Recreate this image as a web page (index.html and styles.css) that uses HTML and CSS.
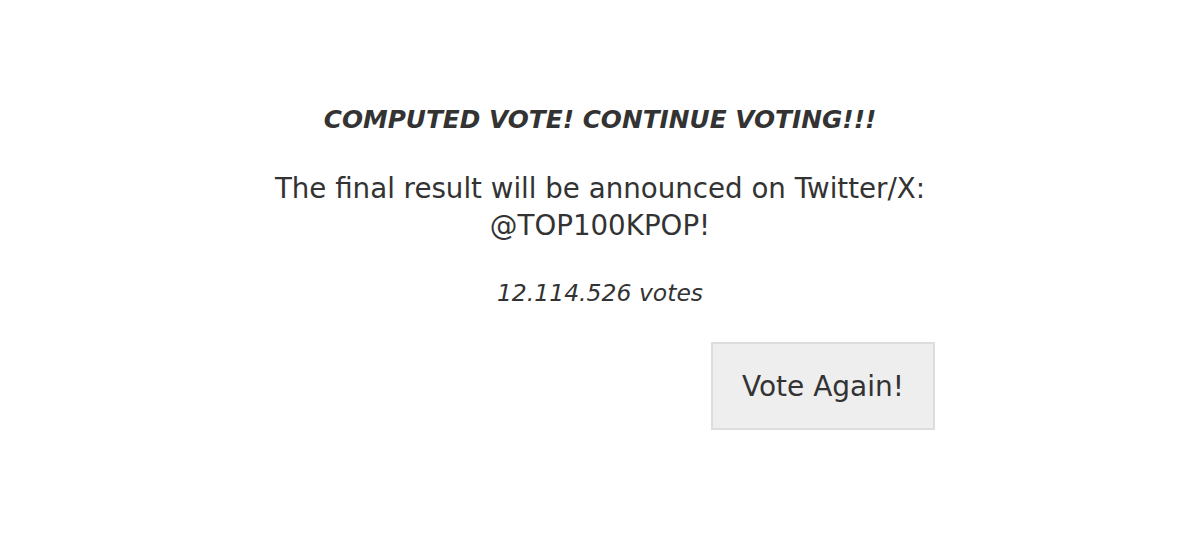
FILE: index.html
```html
<!DOCTYPE html>
<html>
<head>
<meta charset="utf-8">
<link rel="stylesheet" href="styles.css">
</head>
<body>
<main class="page">
  <section class="result">
    <h2 class="title">COMPUTED VOTE! CONTINUE VOTING!!!</h2>
    <p class="info">The final result will be announced on Twitter/X: @TOP100KPOP!</p>
    <p class="count">12.114.526 votes</p>
    <div class="actions">
      <button class="again" type="button">Vote Again!</button>
    </div>
  </section>
</main>
</body>
</html>
```

FILE: styles.css
```css
html, body {
  margin: 0;
  padding: 0;
  background: #ffffff;
}
body {
  font-family: "DejaVu Sans", "Open Sans", sans-serif;
  color: #333333;
}
.page {
  display: flex;
  justify-content: center;
  padding-top: 101px;
}
.result {
  width: 670px;
  display: flex;
  flex-direction: column;
  align-items: center;
  text-align: center;
}
.title {
  margin: 0;
  font-size: 24.8px;
  font-weight: 700;
  font-style: italic;
  line-height: 38px;
  color: #333333;
}
.info {
  margin: 31px 0 0;
  font-size: 27.7px;
  line-height: 37px;
}
.count {
  margin: 31px 0 0;
  font-size: 23.5px;
  font-style: italic;
  line-height: 37px;
}
.actions {
  align-self: stretch;
  display: flex;
  justify-content: flex-end;
  margin-top: 30px;
}
.again {
  width: 224px;
  height: 88px;
  background: #eeeeee;
  border: 2px solid #dddddd;
  font-family: inherit;
  font-size: 28px;
  color: #333333;
  padding: 0;
}
```
